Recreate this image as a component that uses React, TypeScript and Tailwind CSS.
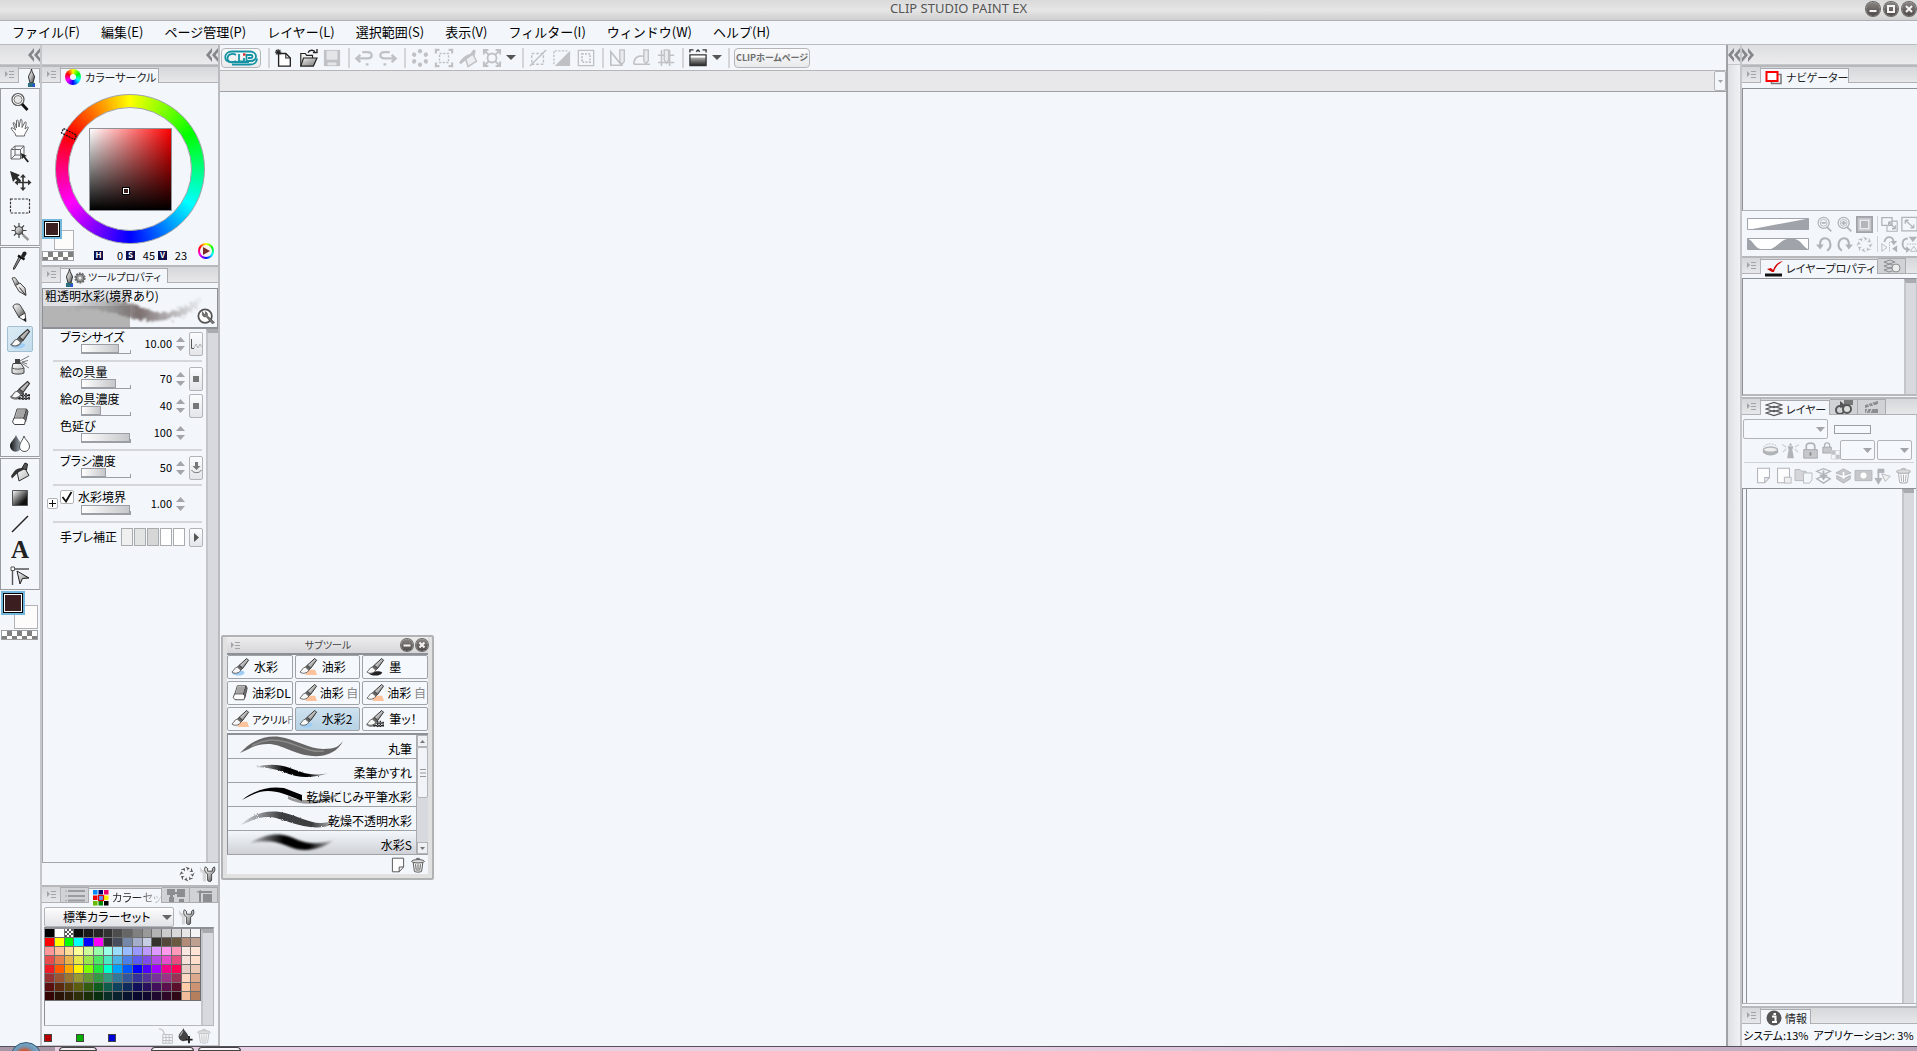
import React from "react";

const cx = (...c: (string | false | undefined)[]) => c.filter(Boolean).join(" ");

/* ---------- shared drawing helpers ---------- */

function Ico({
  children,
  s = 20,
  className = "",
}: {
  children: React.ReactNode;
  s?: number;
  className?: string;
}) {
  return (
    <svg
      width={s}
      height={s}
      viewBox="0 0 20 20"
      fill="none"
      aria-hidden="true"
      className={cx("block shrink-0 overflow-visible", className)}
    >
      {children}
    </svg>
  );
}

function Defs() {
  return (
    <svg width="0" height="0" className="absolute" aria-hidden="true">
      <defs>
        <linearGradient id="metal" x1="0" y1="0" x2="1" y2="1">
          <stop offset="0" stopColor="#ffffff" />
          <stop offset="0.5" stopColor="#b8b8b8" />
          <stop offset="1" stopColor="#333" />
        </linearGradient>
        <linearGradient id="light" x1="0" y1="0" x2="1" y2="1">
          <stop offset="0" stopColor="#ffffff" />
          <stop offset="1" stopColor="#b5b5b5" />
        </linearGradient>
        <linearGradient id="dark" x1="0" y1="0" x2="1" y2="0">
          <stop offset="0" stopColor="#111" />
          <stop offset="1" stopColor="#a9b4be" />
        </linearGradient>
        <linearGradient id="grad" x1="0" y1="0" x2="1" y2="1">
          <stop offset="0" stopColor="#ffffff" />
          <stop offset="0.75" stopColor="#111" />
        </linearGradient>
        <linearGradient id="folder" x1="0" y1="0" x2="1" y2="1">
          <stop offset="0" stopColor="#eee" />
          <stop offset="1" stopColor="#777" />
        </linearGradient>
        <linearGradient id="screen" x1="0" y1="0" x2="0" y2="1">
          <stop offset="0" stopColor="#ddd" />
          <stop offset="1" stopColor="#222" />
        </linearGradient>
        <linearGradient id="wash" x1="0" y1="0" x2="1" y2="0">
          <stop offset="0" stopColor="#555" stopOpacity="0" />
          <stop offset="0.3" stopColor="#777" stopOpacity="0.4" />
          <stop offset="0.55" stopColor="#6e6060" stopOpacity="0.9" />
          <stop offset="0.8" stopColor="#8a8282" stopOpacity="0.55" />
          <stop offset="1" stopColor="#999" stopOpacity="0.15" />
        </linearGradient>
        <linearGradient id="fadeBoth" x1="0" y1="0" x2="1" y2="0">
          <stop offset="0" stopColor="#000" stopOpacity="0.15" />
          <stop offset="0.4" stopColor="#000" />
          <stop offset="0.7" stopColor="#000" />
          <stop offset="1" stopColor="#000" stopOpacity="0.1" />
        </linearGradient>
        <filter id="rough" x="-10%" y="-30%" width="120%" height="160%">
          <feTurbulence type="fractalNoise" baseFrequency="0.25" numOctaves="3" result="n" />
          <feDisplacementMap in="SourceGraphic" in2="n" scale="10" />
          <feGaussianBlur stdDeviation="0.8" />
        </filter>
        <filter id="grain" x="-10%" y="-30%" width="120%" height="160%">
          <feTurbulence type="fractalNoise" baseFrequency="0.6" numOctaves="2" result="n" />
          <feDisplacementMap in="SourceGraphic" in2="n" scale="2.500" />
        </filter>
        <filter id="soft" x="-10%" y="-30%" width="120%" height="160%">
          <feGaussianBlur stdDeviation="1.3" />
        </filter>
      </defs>
    </svg>
  );
}

const Brush = ({ blob }: { blob?: React.ReactNode }) => (
  <>
    {blob}
    <path d="M17.500.5 19.500 2.500 13 11.500 9.200 8Z" fill="url(#metal)" stroke="#333" strokeWidth="1.100" />
    <path d="M9.200 8 13 11.500 10.800 13.500 7 10Z" fill="#666" stroke="#333" strokeWidth="0.8" />
    <path
      d="M7.200 10.200C3.600 10.200 4 13.800 1 15.500c2.500 2.500 8.500 1.800 9.800-2.200Z"
      fill="#f7f7f7"
      stroke="#666"
      strokeWidth="1.100"
    />
  </>
);
const BlobBlue = <path d="M1 15c3-1 14-2 14 1 0 4-11 5-14 1Z" fill="#9fcdf5" />;
const BlobOrange = <path d="M2 19h5l3-6h8l2 6Z" fill="#fcc29b" />;
const BlobInk = <path d="M3 17c4-3 13-3 15-1-1 4-12 5-15 1Z" fill="#222" />;
const BlobPattern = (
  <>
    <path d="M0 16c3-3 8-2 10 1-3 3-8 2-10-1Z" fill="#888" />
    <path
      d="M10 13v6M13 12v7M16 12v7M19 13v6M8 14.500h12M8 17.500h12"
      stroke="#222"
      strokeWidth="1.500"
      strokeDasharray="2 .8"
    />
  </>
);
const EraserShape = (
  <>
    <path d="M7 2h9.500l-3 10H4Z" fill="url(#light)" stroke="#444" />
    <path d="M16.500 2 18 4.500 15.500 15l-2-3Z" fill="#777" stroke="#444" />
    <path d="M4 11h9l2.500 2-1 4.500H4.500L2.500 15Z" fill="#fff" stroke="#444" />
    <path d="M7.500 3h8l-2 7h-8Z" fill="#a5a5a5" />
  </>
);
const Wrenches = (
  <>
    <path d="M0 1v5c1 2 2 3 3.500 3.500V18c0 2 4 2 4 0V9L9 6 7 1 6 5H3Z" fill="#d6d7d9" />
    <path
      d="M6.500 1C5 5 6.500 8.500 9.500 10v7.500c0 2.500 5 2.500 5 0V10c3.500-1.500 5-5 3.500-9L15.500 3v3.500h-6V3Z"
      fill="url(#metal)"
      stroke="#4a4a4a"
      strokeWidth="1.200"
    />
  </>
);
const Recycle = ({ c }: { c: string }) => (
  <g fill={c}>
    {[0, 45, 90, 135, 180, 225, 270, 315].map((a) => (
      <path key={a} d="M8 .5 13.500 2.800 10 6 10.500 3.600Z" transform={`rotate(${a} 10 10)`} />
    ))}
  </g>
);
const Trash = ({ c = "#666" }: { c?: string }) => (
  <>
    <path d="M4 7h12l-1.500 11c-2 1.200-7 1.200-9 0Z" fill="#fafafa" stroke={c} strokeWidth="1.200" />
    <path d="M2 5.500C2.500 2.500 17.500 2.500 18 5.500 17.500 8 2.500 8 2 5.500Z" fill="#ddd" stroke={c} strokeWidth="1.200" />
    <path d="M7.500 3C7.500 1 12.500 1 12.500 3M7 9l.8 8M10 9v8.500M13 9l-.8 8" stroke={c} strokeWidth="1.200" />
  </>
);
const Page = ({ c = "#555" }: { c?: string }) => (
  <path d="M3 1.500h14v11l-5.500 6H3ZM17 12.500h-5.500v6" fill="#fdfdfd" stroke={c} strokeWidth="1.200" />
);

/* ---------- small controls ---------- */

const RING = "bg-[conic-gradient(#ff0,#0f0,#0ff,#00f,#f0f,#f00,#ff0)]";
const CHECK =
  "bg-[repeating-conic-gradient(#808080_0_25%,#fff_0_50%)] bg-[length:10px_10px]";

function MenuGlyph({ className = "" }: { className?: string }) {
  return (
    <svg width="9" height="9" viewBox="0 0 9 9" aria-hidden="true" className={className}>
      <path d="M0 1v6l3-3Z" fill="#a2a4a8" />
      <path d="M4 1.500h5M4 4.500h5M4 7.500h5" stroke="#a2a4a8" />
    </svg>
  );
}

function Header({ children }: { children: React.ReactNode }) {
  return (
    <header className="flex h-[18px] shrink-0 border-t-2 border-[#b6b8bb] bg-linear-to-b from-[#d6d7da] to-[#e8e8ea]">
      <button
        aria-label="パレットメニュー"
        className="flex w-[19px] shrink-0 items-center justify-center border-r border-b border-[#b0b2b6]"
      >
        <MenuGlyph />
      </button>
      {children}
      <div className="flex-1 border-b border-[#b0b2b6]" />
    </header>
  );
}

function Tab({
  icon,
  children,
  className = "",
}: {
  icon: React.ReactNode;
  children?: React.ReactNode;
  className?: string;
}) {
  return (
    <button
      className={cx(
        "mt-px flex h-[15px] shrink-0 items-start gap-[3px] overflow-visible border-t border-r border-[#a9abaf] bg-[#f3f7fc] pl-1 text-[11px] leading-4 whitespace-nowrap text-[#222] [font-feature-settings:'palt']",
        className,
      )}
    >
      {icon}
      {children}
    </button>
  );
}

function IdleTab({ icon, label }: { icon: React.ReactNode; label: string }) {
  return (
    <button
      aria-label={label}
      className="flex w-[28px] shrink-0 items-center justify-center overflow-hidden border-t border-r border-b border-[#a9abaf] bg-[#d0d2d6]"
    >
      {icon}
    </button>
  );
}

function Chevrons({ right }: { right?: boolean }) {
  return (
    <svg width="12" height="14" viewBox="0 0 12 14" aria-hidden="true" className={right ? "rotate-180" : ""}>
      <path d="M6 0 0 7l6 7V10L3.500 7 6 4ZM12 0 6 7l6 7V10L9.500 7 12 4Z" fill="#858689" />
    </svg>
  );
}

const DockBar = ({ children, className = "" }: { children: React.ReactNode; className?: string }) => (
  <div
    className={cx(
      "flex h-5 shrink-0 items-center border-b border-[#c4c6c9] bg-linear-to-b from-[#dddee0] to-[#ebebed]",
      className,
    )}
  >
    {children}
  </div>
);

const ScrollTrack = ({ className = "" }: { className?: string }) => (
  <div className={cx("w-[12px] shrink-0 border-t-4 border-l-2 border-t-[#a9abaf] border-l-[#c4c5ca] bg-[#d8d9de]", className)} />
);

function Swatches({ big }: { big?: boolean }) {
  return (
    <div className={big ? "w-[38px] pl-px" : "w-[32px]"}>
      <div className={cx("relative", big ? "h-[38px]" : "h-[31px]")}>
        <button
          aria-label="サブカラー"
          className={cx(
            "absolute right-0 bottom-0 border border-[#b0b2b6] bg-[#fdfcfa]",
            big ? "size-[24px]" : "size-[20px]",
          )}
        />
        <button
          aria-label="メインカラー"
          className={cx(
            "absolute top-0 left-0 border-2 border-[#73b8dc] bg-white",
            big ? "size-[24px]" : "size-[20px]",
          )}
        >
          <span className="block size-full border border-black bg-white p-px">
            <span className="block size-full bg-[#3b1f20]" />
          </span>
        </button>
      </div>
      <button
        aria-label="透明色"
        className={cx("mt-px block h-[10px] w-full border border-[#9b9da1]", CHECK)}
      />
    </div>
  );
}

/* ---------- tool column ---------- */

type Tool = { name: string; icon: React.ReactNode; on?: boolean };

const tools: Tool[][] = [
  [
    {
      name: "虫めがね",
      icon: (
        <Ico>
          <circle cx="8" cy="7.500" r="6" stroke="#555" strokeWidth="1.200" fill="#fff" />
          <circle cx="8" cy="7.500" r="4" stroke="#777" strokeWidth="1" fill="#e8e8e8" />
          <path d="m12 12 5.500 6" stroke="#111" strokeWidth="2.800" />
        </Ico>
      ),
    },
    {
      name: "移動",
      icon: (
        <Ico>
          <path
            d="M6 18c0-3-5-6-5-8 1.500-1 3 1 4.500 2L3 5c1-1.500 2 0 3.500 5L6.500 2.500c1-1.500 2-.5 2.500 6.500L10.500 1.500c1-1 2 0 1.500 8L15 4c1.500-.5 1.500.5 0 7l2.500-2c1.500 0 1 1-1.500 5-1 2-1.500 2-1.500 4Z"
            fill="#fdfdfd"
            stroke="#666"
          />
        </Ico>
      ),
    },
    {
      name: "操作",
      icon: (
        <Ico>
          <path d="M1 5.500 5 2h9v9l-3.500 4H1ZM1 5.500h9.500V15M10.500 5.500 14 2M5 2v9L1 15M5 11h9" stroke="#666" />
          <path d="m11 9 1 6 1.500-1.500 4 5 1.500-1-4-5L17 12Z" fill="#222" />
        </Ico>
      ),
    },
    {
      name: "レイヤー移動",
      icon: (
        <Ico>
          <path d="m0 1 3 11 2.500-3L10 13l1-2.500L7.500 7 10 5Z" fill="#2a2a2a" />
          <path d="M13 6v13M6.500 12.500h13" stroke="#333" strokeWidth="1.600" />
          <path d="m13 4 3 3.500h-6ZM13 21l3-3.500h-6ZM4.500 12.500 8 9.500v6ZM21.500 12.500 18 9.500v6Z" fill="#333" />
        </Ico>
      ),
    },
    {
      name: "選択範囲",
      icon: (
        <Ico>
          <path d="M.5 3h19v14H.5Z" stroke="#333" strokeWidth="1.200" strokeDasharray="2.500 1.300" />
        </Ico>
      ),
    },
    {
      name: "自動選択",
      icon: (
        <Ico>
          <path d="M9 1v15M1.500 8.500h15M4 3.500l10 10M14 3.500l-10 10" stroke="#444" strokeWidth="1.200" />
          <circle cx="9" cy="8.500" r="4" fill="url(#metal)" stroke="#444" />
          <path d="m13 13 5.500 5" stroke="#999" strokeWidth="2.400" />
        </Ico>
      ),
    },
  ],
  [
    {
      name: "スポイト",
      icon: (
        <Ico>
          <path d="m11 7-6.500 11-1 .5V17l5.500-11Z" fill="#999" stroke="#333" />
          <path d="m8 4.500 6.500 4" stroke="#111" strokeWidth="2.500" />
          <path d="m11 5 2-4c2-1.500 4 0 3.500 2L14 7Z" fill="#222" />
        </Ico>
      ),
    },
    {
      name: "ペン",
      icon: (
        <Ico>
          <path d="M2 1 5 .5 9 6l-3.500 3Z" fill="url(#metal)" stroke="#555" />
          <path d="M5.500 8.500 10 6l5 5 1 7.500-7-4Z" fill="url(#light)" stroke="#444" />
          <path d="m9.500 10.500 6 7.500" stroke="#333" />
        </Ico>
      ),
    },
    {
      name: "鉛筆",
      icon: (
        <Ico>
          <path d="M3 4c0-3 5-4 7-2l5 8-6 4.500Z" fill="url(#metal)" stroke="#444" />
          <path d="m8.500 14 6.500-4 1 8.500Z" fill="#fff" stroke="#444" />
          <path d="m13 16.500 3 2-.5-3.500Z" fill="#111" />
        </Ico>
      ),
    },
    { name: "筆", on: true, icon: <Ico><Brush blob={BlobBlue} /></Ico> },
    {
      name: "エアブラシ",
      icon: (
        <Ico>
          <path d="M10 6 19 1M10 7l9 6M12 7l6-1.500M12 7l5 2" stroke="#777" />
          <path d="M5 4h5v4H5Z" fill="#444" />
          <path d="M3 8.500h8L14 13v5c-3 1.500-9 1.500-12 0v-5Z" fill="url(#light)" stroke="#444" />
          <path d="M2 13c3 1.500 9 1.500 12 0" stroke="#555" />
        </Ico>
      ),
    },
    { name: "デコレーション", icon: <Ico><Brush blob={BlobPattern} /></Ico> },
    { name: "消しゴム", icon: <Ico>{EraserShape}</Ico> },
    {
      name: "色混ぜ",
      icon: (
        <Ico>
          <path d="M6 2c2 5 5.500 7 5.500 11A5.500 5.500 0 0 1 0 13C0 9 4 7 6 2Z" fill="url(#dark)" />
          <path d="M14 3c1 4 5.500 6 5.500 10A5 5 0 0 1 9.500 14C9.500 9.500 13 7 14 3Z" fill="#fff" stroke="#555" />
        </Ico>
      ),
    },
  ],
  [
    {
      name: "塗りつぶし",
      icon: (
        <Ico>
          <path d="M7 9.500 14.500 5.500 19 13.500 9 19Z" fill="url(#light)" stroke="#333" />
          <path d="M15 7C13 5 7 6 4.500 9L1 14l1 2.500 4-4 3-2.500Z" fill="#333" />
          <path d="m12 6 3-5 2.500 1-1 6Z" fill="#555" stroke="#222" />
        </Ico>
      ),
    },
    {
      name: "グラデーション",
      icon: (
        <Ico>
          <path d="M2.500 2.500h15v15h-15Z" fill="url(#grad)" stroke="#555" />
        </Ico>
      ),
    },
    {
      name: "図形",
      icon: (
        <Ico>
          <path d="M2 18 18 2" stroke="#222" strokeWidth="1.500" />
        </Ico>
      ),
    },
    {
      name: "テキスト",
      icon: <span className="font-['Liberation_Serif',serif] text-[25px] leading-5 font-bold text-[#222]">A</span>,
    },
    {
      name: "図形操作",
      icon: (
        <Ico>
          <path d="M2.500 3v16M2 3h17" stroke="#555" strokeWidth="1.400" />
          <path d="M1 1h3.500v3.500H1Z" fill="#fff" stroke="#555" />
          <path d="m7 5 3 13 2.500-5.500L19 12Z" fill="url(#metal)" stroke="#222" />
        </Ico>
      ),
    },
  ],
];

const PenTip = (
  <svg width="9" height="18" viewBox="0 0 9 18" aria-hidden="true" className="shrink-0">
    <path d="M4.500 0c-.6 4-3 6-3 8l1.500 6h3l1.500-6c0-2-2.400-4-3-8Z" fill="url(#metal)" stroke="#333" />
    <path d="M1 14h7v4H1Z" fill="#2a6f7e" />
    <path d="M5.500 15H8v3H5.500Z" fill="#2a50d8" />
  </svg>
);

function ToolColumn() {
  return (
    <aside className="flex w-[42px] shrink-0 flex-col border-r-2 border-[#c4c6ca]">
      <DockBar className="justify-end">
        <button aria-label="折りたたむ"><Chevrons /></button>
      </DockBar>
      <Header>
        <Tab className="w-[21px] justify-center pl-0" icon={PenTip} />
      </Header>
      <div className="mt-[5px] flex flex-col gap-px">
        {tools.map((group, i) => (
          <div key={i} className="flex flex-col border border-[#9a9ca1] border-r-[#b6b8bc]">
            {group.map((t) => (
              <button
                key={t.name}
                aria-label={t.name}
                className={cx(
                  "mx-auto flex h-[26px] w-[26px] items-center justify-center rounded-xs border",
                  t.on ? "border-[#a3bfd2] bg-linear-to-br from-[#dcebf5] to-[#c2dcec]" : "border-transparent",
                )}
              >
                {t.icon}
              </button>
            ))}
          </div>
        ))}
      </div>
      <div className="mt-px">
        <Swatches big />
      </div>
    </aside>
  );
}

/* ---------- colour wheel ---------- */

function Hsv({ k, v }: { k: string; v: string }) {
  return (
    <label className="flex items-center gap-[3px]">
      <span className="flex h-[9px] w-[9px] items-center justify-center bg-[#0c0c48] text-[8px] leading-none font-bold text-white">
        {k}
      </span>
      <input
        defaultValue={v}
        className="w-[17px] bg-transparent text-right text-[11px] leading-3 text-black"
      />
    </label>
  );
}

function ColorCircle() {
  return (
    <section className="relative h-[182px] shrink-0">
      <div className="absolute top-[11px] left-[13px] size-[150px]">
        <div className={cx("size-full rounded-full border border-[#9fa3a8] p-[12px]", RING)}>
          <div className="flex size-full items-center justify-center rounded-full border border-[#9fa3a8] bg-[#f3f7fc]">
            <div className="relative size-[83px] border border-[#8f9398] bg-[linear-gradient(to_top,#000,transparent),linear-gradient(to_right,#fff,#f00)]">
              <div className="absolute top-[58px] left-[32px] size-[8px] border-2 border-black bg-[#3b1f20] outline-1 -outline-offset-2 outline-white" />
            </div>
          </div>
        </div>
        <svg width="18" height="14" viewBox="0 0 18 14" className="absolute top-[33px] left-[5px]" aria-hidden="true">
          <path d="m3.500 1.500 13 6.500-2 4.500-13-6.500Z" stroke="#111" fill="none" strokeDasharray="2 1" strokeWidth="1.200" />
        </svg>
      </div>
      <div className="absolute bottom-[4px] left-0 flex w-full items-end">
        <Swatches />
        <div className="flex flex-1 items-center justify-end gap-[3px] pr-[11px]">
          <Hsv k="H" v="0" />
          <Hsv k="S" v="45" />
          <Hsv k="V" v="23" />
        </div>
        <button
          aria-label="HLS色空間に切り替え"
          className={cx("mr-1 mb-0.5 flex size-4 items-center justify-center rounded-full p-[2px]", RING)}
        >
          <span className="flex size-full items-center justify-center rounded-full bg-[#f6f2f2]">
            <svg width="7" height="8" viewBox="0 0 7 8" aria-hidden="true">
              <path d="M0 0v8l7-4Z" fill="#7a2c2c" />
            </svg>
          </span>
        </button>
      </div>
    </section>
  );
}

/* ---------- tool property ---------- */

const MINI =
  "flex h-[24px] w-[14px] shrink-0 items-center justify-center rounded-xs border border-[#b2b4b8] bg-linear-to-b from-[#fbfcfe] to-[#e4e5e9]";

function Spinner() {
  return (
    <span className="flex flex-col gap-[4px]">
      <button aria-label="増やす">
        <svg width="9" height="5" viewBox="0 0 9 5" className="block"><path d="M0 5h9L4.500 0Z" fill="#a2a4a8" /></svg>
      </button>
      <button aria-label="減らす">
        <svg width="9" height="5" viewBox="0 0 9 5" className="block"><path d="M0 0h9L4.500 5Z" fill="#a2a4a8" /></svg>
      </button>
    </span>
  );
}

type Prop = { id: string; label: string; value: string; fill: number; btn?: React.ReactNode; check?: boolean };

function PropRow({ p }: { p: Prop }) {
  return (
    <div className={cx("flex pr-[3px]", p.check ? "h-[29px]" : "h-[27px]")}>
      <div className="flex w-[17px] shrink-0 items-center pl-[4px]">
        {p.check && (
          <button aria-label="設定を開く" className="flex size-[11px] items-center justify-center rounded-xs border border-[#b2b4b8] bg-white">
            <svg width="7" height="7" viewBox="0 0 7 7" aria-hidden="true"><path d="M3.500 0v7M0 3.500h7" stroke="#111" /></svg>
          </button>
        )}
      </div>
      <div className="w-[71px] shrink-0">
        <div className={cx("flex items-center", p.check ? "h-[15px]" : "h-[13px]")}>
          {p.check && (
            <>
              <input
                type="checkbox"
                defaultChecked
                aria-label={p.label}
                className="size-[14px] shrink-0 appearance-none rounded-xs border border-[#b2b4b8] bg-white"
              />
              <svg width="12" height="12" viewBox="0 0 12 12" className="pointer-events-none -ml-[13px] mr-[5px] shrink-0" aria-hidden="true">
                <path d="M1.500 6 5 10.500 10.500 1" stroke="#111" strokeWidth="1.800" fill="none" />
              </svg>
            </>
          )}
          <label htmlFor={p.id} className="text-[12px] leading-[13px] whitespace-nowrap text-black [font-feature-settings:'palt']">
            {p.label}
          </label>
        </div>
        <div className="relative mt-[2px] ml-auto flex h-[9px] w-[50px] items-end border-b border-[#9b9fa5]">
          <span
            className="block h-[9px] border border-[#9b9fa5] bg-linear-to-r from-white to-[#c6c7ca]"
            style={{ width: `${p.fill}%` }}
          />
          <span className="ml-auto h-[3px] w-px bg-[#9b9fa5]" />
          <input
            type="range"
            aria-label={p.label}
            defaultValue={p.fill}
            className="absolute inset-0 m-0 size-full cursor-pointer opacity-0"
          />
        </div>
      </div>
      <div className="flex flex-1 items-center justify-end gap-1">
        <input
          id={p.id}
          defaultValue={p.value}
          className="w-9 bg-transparent text-right text-[11px] text-black"
        />
        <Spinner />
        <div className="flex w-[14px] shrink-0">{p.btn && <button aria-label="影響元設定" className={MINI}>{p.btn}</button>}</div>
      </div>
    </div>
  );
}

const DOT = <span className="size-[6px] bg-[#777]" />;
const rows: (Prop | "-")[] = [
  {
    id: "size", label: "ブラシサイズ", value: "10.00", fill: 75,
    btn: (
      <svg width="12" height="12" viewBox="0 0 12 12" aria-hidden="true">
        <path d="M1.500 1v9.500H4" stroke="#555" fill="none" />
        <path d="m4 10 2-4 2 4 2-4 1.500 3" stroke="#999" fill="none" strokeDasharray="1.500 .8" />
      </svg>
    ),
  },
  "-",
  { id: "amount", label: "絵の具量", value: "70", fill: 70, btn: DOT },
  { id: "density", label: "絵の具濃度", value: "40", fill: 40, btn: DOT },
  { id: "stretch", label: "色延び", value: "100", fill: 100 },
  "-",
  {
    id: "brush", label: "ブラシ濃度", value: "50", fill: 50,
    btn: (
      <svg width="11" height="12" viewBox="0 0 11 12" aria-hidden="true">
        <path d="M4 0h3v4h2.500l-4 4-4-4H4Z" fill="#777" />
        <path d="M.5 8c2 3.500 8 3.500 10 0" stroke="#777" fill="none" />
      </svg>
    ),
  },
  "-",
  { id: "edge", label: "水彩境界", value: "1.00", fill: 100, check: true },
  "-",
];

function ToolProperty() {
  return (
    <section className="flex min-h-0 flex-1 flex-col">
      <div className="relative mt-[5px] h-[41px] shrink-0 overflow-hidden border border-b-2 border-[#8d9096]">
        <svg viewBox="0 0 174 38" className="absolute inset-0 h-full w-[174px]" aria-hidden="true">
          <path d="M0 0h87v17H0Z" fill="#dfe1e5" />
          <path d="M0 17h87v21H0Z" fill="#b4b4b4" />
          <path d="M20 22C45 8 75 8 95 17s35 10 63-9c-4 20-36 26-62 23-26-6-45-16-76-9Z" fill="url(#wash)" filter="url(#rough)" />
        </svg>
        <div className="relative pl-[2px] text-[12px] leading-[14px] whitespace-nowrap text-black [font-feature-settings:'palt']">
          粗透明水彩(境界あり)
        </div>
        <button aria-label="サブツール詳細" className="absolute right-[2px] bottom-px">
          <Ico s={18}>
            <circle cx="9" cy="9" r="7.500" fill="#fff" stroke="#555" strokeWidth="2" />
            <path d="M6 4v4l2 2 2-.5 7 8 2.500-1.500-8-7.500V6L9.500 4v3H8Z" fill="#777" stroke="#444" strokeWidth="0.700" />
          </Ico>
        </button>
      </div>
      <div className="flex min-h-0 flex-1 border-b border-l border-[#a3a6ab]">
        <div className="min-w-0 flex-1 pt-px">
          {rows.map((r, i) =>
            r === "-" ? (
              <hr key={i} className="my-[3px] mr-1 ml-[10px] border-t-2 border-[#d4d6da]" />
            ) : (
              <PropRow key={i} p={r} />
            ),
          )}
          <div className="flex h-[22px] items-center pr-[3px] pl-[17px]">
            <span className="w-[61px] text-[12px] whitespace-nowrap text-black [font-feature-settings:'palt']">手ブレ補正</span>
            <div className="flex flex-1 gap-px">
              {["bg-[#f0f0f0]", "bg-[#e2e3e3]", "bg-[#d6d6d6]", "bg-white", "bg-white"].map((c, i) => (
                <button key={i} aria-label={`手ブレ補正 ${i + 1}`} className={cx("h-[18px] w-3 border border-[#a9abaf]", c)} />
              ))}
            </div>
            <button aria-label="手ブレ補正の詳細" className="flex h-[19px] w-[14px] items-center justify-center rounded-xs border border-[#b2b4b8] bg-linear-to-b from-[#fbfcfe] to-[#e4e5e9]">
              <svg width="5" height="9" viewBox="0 0 5 9" aria-hidden="true"><path d="M0 0v9l5-4.500Z" fill="#555" /></svg>
            </button>
          </div>
        </div>
        <ScrollTrack />
      </div>
      <div className="flex h-[22px] shrink-0 items-center justify-end gap-[5px] pr-[2px]">
        <button aria-label="初期設定に戻す"><Ico s={16}><Recycle c="#555" /></Ico></button>
        <button aria-label="詳細設定"><Ico s={16}>{Wrenches}</Ico></button>
      </div>
    </section>
  );
}

/* ---------- colour set ---------- */

const palette = [
  "000 fff check 0d0d0d 1a1a1a 262626 333 4d4d4d 666 808080 999 b3b3b3 ccc d9d9d9 e6e6e6 f5f5f5",
  "f00 ff0 0f0 0ff 00f f0f 2b2d33 474d5c 7688aa a4aecb c5cee3 35312b 54483a 6b5840 b38c78 bea090",
  "f99 ffbd99 fd9 ff9 cf9 9fa 99ffe6 9df 9bf 99f b9f d9f f9e f9b fbe7df ffe3d6",
  "e64d4d e6804d e6b34d e6e64d 99e64d 4de666 4de6c3 4db3e6 4d80e6 5e5eee 804de6 b34de6 e64dcc e64d80 f5e1da ffdfcc",
  "ee1c24 ff5a00 ffa500 fff200 80ff00 22e63c 00ffcc 00a2ff 0058ff 0000ff 4d00ff a200ff f0008c ff0058 e6cdc5 ebc8b4",
  "933 953 973 993 693 394 339980 379 359 339 539 739 938 935 ffd9c4 dba98c",
  "5c0f0f 5c2b0f 5c420f 5c5c0f 335c0f 0f5c1c 0f5c4a 0f425c 0f2b5c 0f0f5c 270f5c 420f5c 5c0f4d 5c0f2b ffccaa cc9373",
  "330505 291206 2e2008 2e2e08 1b2e08 082e10 082e27 08222e 08142e 08082e 10082e 1e082e 2e0826 2e0815 f2bb99 b37f5c",
].map((r) => r.split(" "));

const ColorSetIcon = (
  <svg width="16" height="16" viewBox="0 0 16 16" aria-hidden="true" className="mt-px shrink-0">
    {["#08f", "#006", "#e06", "#e00", "#fff", "#fe0", "#6b0", "#080", "#000"].map((c, i) => (
      <rect key={i} x={(i % 3) * 5.500} y={Math.floor(i / 3) * 5.500} width="4.500" height="4.500" fill={c} />
    ))}
    <rect x="5.500" y="5.500" width="5" height="5" fill="#59f" stroke="#e00" strokeWidth="1.200" />
  </svg>
);

function ColorSet() {
  return (
    <section className="flex h-[143px] shrink-0 flex-col border-b border-[#c4c6ca] pr-1 pl-[2px]">
      <div className="mt-[4px] flex h-5 items-center gap-[5px]">
        <div className="relative w-[130px]">
          <select
            aria-label="カラーセット"
            className="block h-5 w-full appearance-none rounded-xs border border-[#b2b4b8] bg-linear-to-b from-[#fdfdfe] to-[#e2e3e7] pl-[18px] text-[12px] leading-4 text-black [font-feature-settings:'palt']"
          >
            <option>標準カラーセット</option>
          </select>
          <svg width="10" height="5" viewBox="0 0 10 5" className="pointer-events-none absolute top-[8px] right-[2px]" aria-hidden="true">
            <path d="M0 0h10L5 5Z" fill="#666" />
          </svg>
        </div>
        <button aria-label="カラーセットを編集"><Ico s={16}>{Wrenches}</Ico></button>
      </div>
      <div className="flex h-[99px] border border-t-2 border-[#8d9096] border-r-[#b6b8bc] border-b-[#b6b8bc]">
        <div className="flex-1">
          <div className="grid h-[72px] grid-cols-16 gap-px bg-[#6f6f6f] pr-px pb-px">
            {palette.flat().map((c, i) =>
              c === "check" ? (
                <button key={i} aria-label="透明" className="bg-[repeating-conic-gradient(#555_0_25%,#fff_0_50%)] bg-[length:4px_4px]" />
              ) : (
                <button key={i} aria-label={`#${c}`} style={{ backgroundColor: `#${c}` }} />
              ),
            )}
          </div>
        </div>
        <ScrollTrack />
      </div>
      <div className="flex flex-1 items-center">
        {["bg-[#b80000]", "bg-[#00b000]", "bg-[#0000d8]"].map((c) => (
          <button key={c} aria-label="スウォッチ" className={cx("mr-6 mt-1 size-[8px] border border-[#444]", c)} />
        ))}
        <div className="ml-auto flex items-center gap-[3px] pr-[2px]">
          <Ico s={16}>
            <path d="M6 8h12v11H6ZM6 12h12M6 15.500h12M10 8v11M14 8v11" stroke="#c0c2c6" strokeWidth="1.300" />
            <path d="M1 1c5 0 6 3 7 7" stroke="#c0c2c6" strokeWidth="1.500" />
          </Ico>
          <button aria-label="色を追加">
            <Ico s={16}>
              <path d="M8 0c1 4 6 7 6 10.500A6 6 0 0 1 2 10.500C2 7 7 4 8 0Z" fill="#444" />
              <path d="M7 4c0 2-3 4-3 6" stroke="#aaa" strokeWidth="1.500" />
              <path d="M15 10v9M10.500 14.500h9" stroke="#222" strokeWidth="2.400" />
            </Ico>
          </button>
          <button aria-label="色を削除"><Ico s={16}><Trash c="#c0c2c6" /></Ico></button>
        </div>
      </div>
    </section>
  );
}

function ColorColumn() {
  return (
    <aside className="flex w-[178px] shrink-0 flex-col border-r-2 border-[#b9bbbf]">
      <DockBar className="justify-end">
        <button aria-label="折りたたむ"><Chevrons /></button>
      </DockBar>
      <Header>
        <Tab
          className="w-[98px]"
          icon={
            <span className={cx("mr-px flex size-4 shrink-0 items-center justify-center rounded-full", RING)}>
              <span className="size-[6px] rounded-full bg-[#f3f7fc]" />
            </span>
          }
        >
          カラーサークル
        </Tab>
      </Header>
      <ColorCircle />
      <Header>
        <Tab
          className="w-[107px]"
          icon={
            <span className="flex shrink-0 items-start">
              {PenTip}
              <svg width="12" height="12" viewBox="0 0 12 12" className="-mr-px mt-[3px]" aria-hidden="true">
                <circle cx="6" cy="6" r="4.500" fill="#aaa" stroke="#666" strokeWidth="2.200" strokeDasharray="1.800 1" />
                <circle cx="6" cy="6" r="3.800" fill="#999" stroke="#666" />
                <circle cx="6" cy="6" r="1.500" fill="#eee" />
              </svg>
            </span>
          }
        >
          <span className="text-[10px]">ツールプロパティ</span>
        </Tab>
      </Header>
      <ToolProperty />
      <Header>
        <IdleTab
          label="カラースライダー"
          icon={
            <svg width="20" height="13" viewBox="0 0 20 13" aria-hidden="true">
              <path d="M0 2h2M0 7h2M0 11.500h2" stroke="#aaa" />
              <path d="M3 2h17M3 7h17M3 11.500h17" stroke="#9a9c9f" strokeWidth="2" />
            </svg>
          }
        />
        <Tab className="w-[73px]" icon={ColorSetIcon}>
          <span className="bg-linear-to-r from-[#222] from-50% to-[#222]/10 bg-clip-text text-transparent">
            カラーセッ
          </span>
        </Tab>
        <IdleTab
          label="中間色"
          icon={
            <svg width="18" height="13" viewBox="0 0 18 13" aria-hidden="true">
              <path d="M0 0h8v6H0ZM10 0h8v8h-8ZM2 8h5v5H2ZM12 10h5v3h-5ZM7 3h4v2H7ZM3 5h3v4H3Z" fill="#8b8d90" />
            </svg>
          }
        />
        <IdleTab
          label="カラーヒストリー"
          icon={
            <svg width="16" height="13" viewBox="0 0 16 13" aria-hidden="true">
              <path d="M0 3 5 1v3Z" fill="#8b8d90" />
              <path d="M3 2h13v2H5v9H3ZM7 5h9v8H7Z" fill="#8b8d90" />
            </svg>
          }
        />
      </Header>
      <ColorSet />
    </aside>
  );
}

/* ---------- command bar ---------- */

const G = "#bfc1c5";
const Sep = () => <span className="mr-[2px] ml-1 h-5 w-[2px] shrink-0 bg-[#d3d5d9]" />;
const Cmd = ({ label, children }: { label: string; children: React.ReactNode }) => (
  <button aria-label={label} className="flex h-6 w-6 shrink-0 items-center justify-center">
    <Ico s={18}>{children}</Ico>
  </button>
);
const Drop = () => (
  <button aria-label="メニュー" className="flex h-6 w-[14px] shrink-0 items-center justify-center">
    <svg width="10" height="5" viewBox="0 0 10 5" aria-hidden="true"><path d="M0 0h10L5 5Z" fill="#555" /></svg>
  </button>
);
const BTN = "shrink-0 rounded-sm border border-[#b4b6ba] bg-linear-to-b from-[#fbfbfc] to-[#e9eaec]";

function CommandBar() {
  return (
    <div className="flex h-[26px] shrink-0 items-center border-b border-[#b4b6ba] pl-px">
      <button aria-label="CLIP" className={cx("flex h-5 w-10 items-center justify-center", BTN)}>
        <svg width="36" height="16" viewBox="0 0 36 16" fill="none" stroke="#1593a5" strokeWidth="1.800" aria-hidden="true">
          <path d="M13 5C11 3.500 5 3 4.500 8s6 5 8.500 3" />
          <path d="M16 4v7.500h5V8M26 12H9C0 13 0 1.500 9 1.500h18c8 0 8 10 0 9.500h-3.500V5H28c2 0 2 3 0 3h-3" />
          <path d="M20 4.500h2.500" stroke="#e02a2a" strokeWidth="2.400" />
          <path d="M9 14.500h18c5 0 7-3 7-6" />
        </svg>
      </button>
      <span className="w-[3px]" />
      <Sep />
      <Cmd label="新規">
        <path d="M4 5h8l5 5v9H4Z" fill="#fff" stroke="#222" strokeWidth="1.500" />
        <path d="M12 5v5h5M3.500 0v7M0 3.500h7M1 1l5 5M6 1 1 6" stroke="#222" strokeWidth="1.200" />
      </Cmd>
      <Cmd label="開く">
        <path d="M2 19V5h5l1.500 2H15v4" fill="#eee" stroke="#222" strokeWidth="1.300" />
        <path d="M2 19 5 10h15l-4 9Z" fill="url(#folder)" stroke="#222" strokeWidth="1.300" />
        <path d="M10 4c2-4 7-3 8 0M15.500 4H20V0" stroke="#222" strokeWidth="1.500" />
      </Cmd>
      <Cmd label="保存">
        <path d="M1 1h18v18H1Z" fill={G} />
        <path d="M4 2h12v10H4ZM5 15h10v3H5Z" fill="#e4e5e8" />
      </Cmd>
      <Sep />
      <Cmd label="取り消し">
        <path d="M6 6.500 1.500 10.500 6 14.500M2 10.500h12c6 0 6-7 0-7H8M12 17h3" stroke={G} strokeWidth="2.600" />
      </Cmd>
      <Cmd label="やり直し">
        <path d="m14 6.500 4.500 4-4.500 4M18 10.500H6c-6 0-6-7 0-7h6M5 17h3" stroke={G} strokeWidth="2.600" />
      </Cmd>
      <Sep />
      <Cmd label="消去">
        <g fill={G}>
          {[0, 60, 120, 180, 240, 300].map((a) => (
            <circle key={a} cx="10" cy="2.500" r="2.400" transform={`rotate(${a} 10 10)`} />
          ))}
        </g>
      </Cmd>
      <Cmd label="選択範囲外を消去">
        <path d="M5 5h10v10H5Z" stroke={G} strokeWidth="1.500" strokeDasharray="2.500 1.500" />
        <path d="M1 5V1h4M15 1h4v4M19 15v4h-4M5 19H1v-4" stroke={G} strokeWidth="2.500" />
      </Cmd>
      <Cmd label="塗りつぶし">
        <path d="m7 10 8-5 4.500 8.500L10 19.500Z" fill="#eceef1" stroke={G} strokeWidth="1.600" />
        <path d="M16 6C11 4 5 8 0 15l2 2 7-6Z" fill={G} />
        <path d="m12 6 4-5.500 2.500 1-1 6Z" fill={G} />
      </Cmd>
      <Cmd label="拡大・縮小・回転">
        <circle cx="10" cy="10" r="5" stroke={G} strokeWidth="2" />
        <path d="M1 6V1h5M19 6V1h-5M1 14v5h5M19 14v5h-5M1 1l5.500 5.500M19 1l-5.500 5.500M1 19l5.500-5.500M19 19l-5.500-5.500" stroke={G} strokeWidth="2.200" />
      </Cmd>
      <Drop />
      <Sep />
      <Cmd label="選択を解除">
        <path d="M3 5h13v12H3Z" stroke={G} strokeWidth="1.600" strokeDasharray="3 2" />
        <path d="M1 19 19 1" stroke={G} strokeWidth="1.600" />
      </Cmd>
      <Cmd label="選択範囲を反転">
        <path d="M19 2v17H2Z" fill={G} />
        <path d="M1 17V2h15" stroke={G} strokeWidth="1.500" strokeDasharray="2.500 1.500" />
      </Cmd>
      <Cmd label="選択範囲の境界線">
        <path d="M1.500 1.500h17v17h-17Z" stroke={G} strokeWidth="1.500" />
        <path d="M5.500 5.500h9v9h-9Z" stroke={G} strokeWidth="2" strokeDasharray="2 1.500" />
      </Cmd>
      <Sep />
      <Cmd label="定規にスナップ">
        <path d="M2 3v15h12Z" stroke={G} strokeWidth="1.800" />
        <path d="M12 1h5v13l-2.500 3L12 14Z" fill="#e8eaed" stroke={G} strokeWidth="1.500" />
      </Cmd>
      <Cmd label="特殊定規にスナップ">
        <path d="M1 17C1 9 6 7 12 8M1 17h18" stroke={G} strokeWidth="1.800" />
        <path d="M12 1h5v12l-2.500 3.500L12 13Z" fill="#e8eaed" stroke={G} strokeWidth="1.500" />
      </Cmd>
      <Cmd label="グリッドにスナップ">
        <path d="M5 1v18M14 1v18M1 7h18M1 15h18" stroke={G} strokeWidth="1.800" />
        <path d="M8 1h5v11l-2.500 4L8 12Z" fill="#e8eaed" stroke={G} strokeWidth="1.500" />
      </Cmd>
      <Sep />
      <Cmd label="キャンバス表示">
        <path d="M1 4V1h4M15 1h4v3M8 3l2-2 2 2" stroke="#333" strokeWidth="1.500" />
        <path d="M1 6.500h18v12H1Z" fill="url(#screen)" stroke="#333" strokeWidth="1.400" />
        <path d="M2 7.500h16v2H2Z" fill="#fff" />
      </Cmd>
      <Drop />
      <Sep />
      <button className={cx("ml-[2px] h-5 w-[76px] text-center text-[9px] leading-[18px] font-bold whitespace-nowrap text-[#6e6e6e] [font-feature-settings:'palt']", BTN)}>
        CLIPホームページ
      </button>
    </div>
  );
}

/* ---------- floating sub tool palette ---------- */

const groups: { n: string; blob?: React.ReactNode; eraser?: boolean; on?: boolean; extra?: string; small?: boolean }[] = [
  { n: "水彩", blob: BlobBlue },
  { n: "油彩", blob: BlobOrange },
  { n: "墨", blob: BlobInk },
  { n: "油彩DL", eraser: true },
  { n: "油彩", blob: BlobOrange, extra: " 自" },
  { n: "油彩", blob: BlobOrange, extra: " 自" },
  { n: "アクリル", blob: BlobOrange, extra: "F", small: true },
  { n: "水彩2", blob: BlobBlue, on: true },
  { n: "筆ッ！", blob: BlobPattern },
];

const strokes = [
  {
    n: "丸筆",
    art: (
      <>
        <path d="M12 18C24 5 38 0 52 2s30 12 43 12 16-3 20-8C110 17 98 22 84 21 64 19 54 9 40 9S22 14 12 18Z" fill="#666" />
        <path d="M24 11C36 4 46 4 58 7s24 11 38 9" stroke="#8a8a8a" strokeWidth="1.500" fill="none" />
      </>
    ),
  },
  {
    n: "柔筆かすれ",
    art: (
      <g filter="url(#grain)">
        <path d="M27 8C40 5 50 5 62 9s18 9 40 5C88 18 78 19 68 17S52 9 27 8Z" fill="url(#fadeBoth)" />
      </g>
    ),
  },
  {
    n: "乾燥にじみ平筆水彩",
    art: (
      <>
        <path d="M60 13c14 7 40 6 54-6-8 14-38 18-54 9Z" fill="#999" />
        <path d="M14 17C28 6 42 3 56 5l18 7v6C60 12 50 8 40 8S22 13 14 17Z" fill="#000" />
      </>
    ),
  },
  {
    n: "乾燥不透明水彩",
    art: (
      <g filter="url(#grain)">
        <path d="M13 18C24 7 38 3 52 5s30 12 42 11 16-3 20-9C110 18 96 22 82 20 64 18 52 10 40 10S22 15 13 18Z" fill="url(#fadeBoth)" opacity="0.750" />
      </g>
    ),
  },
  {
    n: "水彩S",
    art: (
      <path d="M22 12C36 3 50 2 60 5s20 12 46 4C92 20 74 21 62 16S42 9 22 12Z" fill="url(#fadeBoth)" filter="url(#soft)" />
    ),
  },
];

const RoundBtn = ({ label, children, s = "size-3" }: { label: string; children: React.ReactNode; s?: string }) => (
  <button aria-label={label} className={cx("flex items-center justify-center rounded-full bg-linear-to-b from-[#8a8684] to-[#4e4a49] ring-1 ring-[#6a6866]", s)}>
    <svg width="10" height="10" viewBox="0 0 10 10" fill="none" stroke="#f4f4f4" strokeWidth="2" aria-hidden="true">
      {children}
    </svg>
  </button>
);

function SubTool() {
  return (
    <section className="absolute top-[543px] left-px w-[213px] rounded-xs border-2 border-[#b0b2b4] bg-[#e1e1e2] px-1 pb-[4px]">
      <header className="flex h-[16px] items-center bg-linear-to-b from-[#eeeeef] to-[#d6d6d8]">
        <MenuGlyph className="ml-1" />
        <h2 className="flex-1 pl-[15px] text-center text-[10px] leading-4 text-[#444] [font-feature-settings:'palt']">サブツール</h2>
        <div className="flex gap-[3px]">
          <RoundBtn label="最小化"><path d="M1.500 5.500h7" /></RoundBtn>
          <RoundBtn label="閉じる"><path d="m2.500 2.500 5 5M7.500 2.500l-5 5" /></RoundBtn>
        </div>
      </header>
      <div className="grid grid-cols-3 gap-[2px] border-t-2 border-[#8d9096] bg-[#f3f7fc] pb-[2px]">
        {groups.map((g, i) => (
          <button
            key={i}
            className={cx(
              "flex h-6 items-center gap-[3px] rounded-xs border border-[#9fa3a8] pl-[3px] whitespace-nowrap text-black [font-feature-settings:'palt']",
              g.on ? "bg-linear-to-b from-[#cfe2f0] to-[#b6d2e4]" : "bg-[#f5f9fd]",
              g.small ? "text-[10px]" : "text-[12px]",
            )}
          >
            <Ico s={18}>{g.eraser ? EraserShape : <Brush blob={g.blob} />}</Ico>
            <span className={g.extra || g.eraser ? "" : "pl-[2px]"}>
              {g.n}
              {g.extra && <span className="whitespace-pre text-[#888]">{g.extra}</span>}
            </span>
          </button>
        ))}
      </div>
      <div className="flex h-[121px] border-t-2 border-l border-[#8d9096] bg-[#f3f7fc]">
        <ul className="flex-1">
          {strokes.map((s, i) => (
            <li
              key={s.n}
              className={cx(
                "relative h-6 border-b border-[#9fa3a8]",
                i === 4 && "bg-linear-to-b from-[#f3f7fc] to-[#cfd1d6]",
              )}
            >
              <svg width="130" height="23" viewBox="0 0 130 23" className="absolute top-0 left-0" aria-hidden="true">
                {s.art}
              </svg>
              <button className="relative flex size-full items-end justify-end pr-1 text-[12px] leading-[19px] whitespace-nowrap text-black [font-feature-settings:'palt']">
                {s.n}
              </button>
            </li>
          ))}
        </ul>
        <div className="flex w-3 flex-col border-l border-[#a9abaf] bg-[#d8d9de]">
          <button aria-label="上へ" className="flex h-3 items-center justify-center border border-[#b2b4b8] bg-[#eef0f3]">
            <svg width="5" height="3" viewBox="0 0 5 3" aria-hidden="true"><path d="M0 3h5L2.500 0Z" fill="#777" /></svg>
          </button>
          <div className="flex h-[51px] items-center justify-center rounded-xs border border-[#b2b4b8] bg-[#f0f3f7]">
            <svg width="6" height="8" viewBox="0 0 6 8" aria-hidden="true"><path d="M0 .5h6M0 4h6M0 7.500h6" stroke="#999" /></svg>
          </div>
          <button aria-label="下へ" className="mt-auto flex h-3 items-center justify-center border border-[#b2b4b8] bg-[#eef0f3]">
            <svg width="5" height="3" viewBox="0 0 5 3" aria-hidden="true"><path d="M0 0h5L2.500 3Z" fill="#777" /></svg>
          </button>
        </div>
      </div>
      <div className="flex h-[20px] items-center justify-end gap-[4px] border-t border-[#9fa3a8] bg-[#f3f7fc] pr-[2px]">
        <button aria-label="サブツールの複製"><Ico s={16}><Page /></Ico></button>
        <button aria-label="サブツールの削除"><Ico s={16}><Trash c="#555" /></Ico></button>
      </div>
    </section>
  );
}

/* ---------- right dock ---------- */

const Flat = ({ label, children }: { label: string; children: React.ReactNode }) => (
  <button aria-label={label} className="flex w-5 shrink-0 items-center justify-center">
    <Ico s={17}>{children}</Ico>
  </button>
);
const VSep = () => <span className="mr-px ml-[3px] h-4 w-px shrink-0 bg-[#d0d2d6]" />;
const S = "#b0b3b8";

function Navigator() {
  return (
    <section className="flex h-[173px] shrink-0 flex-col pt-[5px]">
      <div className="h-[123px] shrink-0 border border-r-0 border-[#8d9096] border-b-[#b0b2b6]" />
      <div className="flex h-[26px] shrink-0 items-center overflow-hidden pl-[5px]">
        <div className="relative mr-[5px] h-3 w-[62px] shrink-0">
          <svg width="62" height="12" viewBox="0 0 62 12" aria-hidden="true" className="block">
            <path d="M.5.500h61v11H.5Z" fill="#fff" stroke="#a0a3a9" />
            <path d="M3 11.500 61.500.5v11Z" fill="#a0a3a9" />
          </svg>
          <input type="range" aria-label="拡大率" className="absolute inset-0 m-0 size-full opacity-0" />
        </div>
        <Flat label="ズームアウト">
          <circle cx="9" cy="8" r="6.500" stroke={S} strokeWidth="1.500" /><circle cx="9" cy="8" r="4" stroke={S} />
          <path d="M6.500 8h5M13 13l5 5" stroke={S} strokeWidth="2" />
        </Flat>
        <Flat label="ズームイン">
          <circle cx="9" cy="8" r="6.500" stroke={S} strokeWidth="1.500" /><circle cx="9" cy="8" r="4" stroke={S} />
          <path d="M6.500 8h5M9 5.500v5M13 13l5 5" stroke={S} strokeWidth="2" />
        </Flat>
        <Flat label="100%">
          <path d="M1 1h18v18H1Z" fill="#c3c5c9" stroke="#a0a3a9" strokeWidth="2" />
          <path d="M5 5h10v10H5Z" fill="#b4b6ba" stroke="#f3f7fc" strokeWidth="1.300" />
        </Flat>
        <VSep />
        <Flat label="フィッティング">
          <path d="M7 6h12v12H7Z" stroke={S} strokeWidth="1.300" /><path d="M1 2h12v9H1Z" fill="#f3f7fc" stroke={S} strokeWidth="1.500" />
          <path d="m9 7 8 8M9 7v4M9 7h4M17 15v-4M17 15h-4" stroke={S} strokeWidth="1.500" />
        </Flat>
        <Flat label="全体表示">
          <path d="M1 1.500h18v16H1Z" stroke={S} strokeWidth="1.500" /><path d="m5 5 10 9M5 5v4M5 5h4M15 14v-4M15 14h-4" stroke={S} strokeWidth="1.500" />
        </Flat>
      </div>
      <div className="flex h-[14px] shrink-0 items-center pl-[5px]">
        <div className="relative mr-[5px] h-3 w-[62px] shrink-0">
          <svg width="62" height="12" viewBox="0 0 62 12" aria-hidden="true" className="block">
            <path d="M.5.500h61v11H.5Z" fill="#fff" stroke="#a0a3a9" />
            <path d="M.5.500C6 2 8 11 14 11h10C30 9 34 2 40 1h8c6 1 8 8 13.500 10.500H.5Z" fill="#a0a3a9" />
          </svg>
          <input type="range" aria-label="回転" className="absolute inset-0 m-0 size-full opacity-0" />
        </div>
        <Flat label="左回転">
          <path d="M5 11C3 0 17 0 17 10c0 3-2 6-4 7" stroke={S} strokeWidth="2.500" /><path d="M0 10h9l-4 6Z" fill={S} />
        </Flat>
        <Flat label="右回転">
          <path d="M15 11C17 0 3 0 3 10c0 3 2 6 4 7" stroke={S} strokeWidth="2.500" /><path d="M11 10h9l-5 6Z" fill={S} />
        </Flat>
        <Flat label="回転をリセット"><Recycle c="#b8babe" /></Flat>
        <VSep />
        <Flat label="左右反転">
          <path d="M4 7C6-1 14 0 15 7" stroke={S} strokeWidth="2.200" /><path d="M11 6h8l-4 5Z" fill={S} />
          <path d="M10 7v12" stroke={S} strokeDasharray="2 1" /><path d="M1 9v9l6-4.500Z" stroke={S} /><path d="M19 11v8l-6-4Z" fill={S} />
        </Flat>
        <Flat label="上下反転">
          <path d="M8 3C0 3 0 15 7 16" stroke={S} strokeWidth="2.200" /><path d="m6 12 5 4-5 4Z" fill={S} />
          <path d="M7 9.500h12" stroke={S} strokeDasharray="2 1" /><path d="M9 1h10l-5 6Z" fill={S} /><path d="M11 18h8l-4-6Z" stroke={S} />
        </Flat>
      </div>
    </section>
  );
}

const DimSelect = ({ label, w }: { label: string; w: string }) => (
  <div className={cx("relative shrink-0", w)}>
    <select aria-label={label} className="block h-5 w-full appearance-none rounded-xs border border-[#b2b4b8] bg-[#f5f8fc]" />
    <svg width="9" height="5" viewBox="0 0 9 5" className="pointer-events-none absolute top-[8px] right-[3px]" aria-hidden="true">
      <path d="M0 0h9L4.500 5Z" fill="#a2a4a8" />
    </svg>
  </div>
);

function LayerPanel() {
  return (
    <section className="flex min-h-0 flex-1 flex-col border-r border-[#c4c6ca]">
      <div className="mt-1 flex items-center pl-px">
        <DimSelect label="合成モード" w="w-[85px]" />
        <input aria-label="不透明度" className="ml-[6px] h-[9px] w-[37px] border border-[#9b9fa5] bg-[#f5f8fc]" />
      </div>
      <div className="mt-px flex h-5 items-center pl-[18px]">
        <Flat label="下のレイヤーでクリッピング">
          <path d="M1 8c4-4 14-4 18 0v4c-4 5-14 5-18 0Z" fill={S} /><path d="M2 9c4 3 12 3 16 0-4-3-12-3-16 0Z" fill="#eee" /><path d="M2 6c3-5 13-5 16 0" stroke={S} strokeDasharray="2 1.500" />
        </Flat>
        <Flat label="参照レイヤー">
          <path d="M8 8h4l2 11H6ZM7 5h6v3H7ZM8 4l2-3 2 3Z" fill={S} /><path d="m5 6-5-3M5 8l-4 4M15 6l5-3M15 8l4 4" stroke="#d0d2d5" strokeWidth="1.500" />
        </Flat>
        <Flat label="レイヤーをロック">
          <path d="M5 9V5c0-5 10-5 10 0v4" stroke={S} strokeWidth="2" /><path d="M2 9h16v10H2Z" fill="#c5c7cb" stroke="#a0a3a9" /><path d="M10 12v4" stroke="#888" strokeWidth="2" />
        </Flat>
        <Flat label="透明ピクセルをロック">
          <path d="M3 6V4c0-4 6-4 6 0v2" stroke={S} strokeWidth="1.500" /><path d="M1 6h10v7H1Z" fill="#c5c7cb" stroke="#a0a3a9" />
          <path d="M11 10h5v5h-5ZM16 15h5v5h-5Z" fill="#c0c2c6" /><path d="M11 10h10v10H11Z" stroke="#d0d2d5" />
        </Flat>
        <div className="flex gap-[2px]">
          <DimSelect label="マスク" w="w-[35px]" />
          <DimSelect label="定規の表示範囲" w="w-[35px]" />
        </div>
      </div>
      <hr className="mx-[2px] mt-[2px] border-t border-[#d0d2d6]" />
      <div className="flex h-[25px] items-center pl-[11px]">
        <Flat label="新規ラスターレイヤー"><Page c={S} /></Flat>
        <Flat label="新規ベクターレイヤー"><Page c={S} /><path d="M11 12h8v7h-8Z" fill="#eee" stroke={S} /></Flat>
        <Flat label="新規レイヤーフォルダー"><path d="M0 3h6l2 2h5v11H0Z" fill="#d4d6d9" stroke={S} /><path d="M10 7h10v8l-3 4h-7Z" fill="#f3f7fc" stroke={S} /></Flat>
        <Flat label="下のレイヤーに転写"><path d="m2 5 8-3 8 3-8 4ZM2 14l8-4 8 4-8 5Z" stroke={S} strokeWidth="1.500" /><path d="M10 4v9M7 10l3 4 3-4Z" stroke={S} fill={S} strokeWidth="2" /></Flat>
        <Flat label="下のレイヤーに結合"><path d="m1 7 9-5 9 5-9 3ZM2 10v4l8 5 8-5v-4l-8 4Z" fill="#c5c7cb" stroke={S} /><path d="M10 6v8" stroke="#fff" strokeWidth="2" /></Flat>
        <Flat label="レイヤーマスクを作成"><path d="M0 4h20v12H0Z" fill="#c5c7cb" stroke={S} /><circle cx="10" cy="10" r="3.500" fill="#fff" /></Flat>
        <Flat label="マスクをレイヤーに適用"><path d="M3 2h8v5H3Z" fill={S} /><path d="m8 8 10 3-6 6Z" fill="#eee" stroke={S} /><path d="M4 5v12M1 14l3 5 3-5Z" stroke={S} strokeWidth="2" /></Flat>
        <Flat label="レイヤーを削除"><Trash c={S} /></Flat>
      </div>
      <div className="mb-[2px] flex min-h-0 flex-1 border-y border-l border-[#8d9096] border-b-[#b0b2b6]">
        <div className="w-[4px] border-r border-[#8d9096]" />
        <div className="flex-1" />
        <ScrollTrack className="mr-[2px]" />
      </div>
    </section>
  );
}

function RightDock() {
  return (
    <>
      <div className="flex w-4 shrink-0 flex-col border-r-2 border-l-2 border-r-[#c4c6ca] border-l-[#9fa1a5] bg-linear-to-r from-[#dfe0e3] to-[#f0f1f4]">
        <DockBar className="justify-end"><button aria-label="広げる"><Chevrons /></button></DockBar>
      </div>
      <aside className="flex w-[175px] shrink-0 flex-col">
        <DockBar><button aria-label="折りたたむ"><Chevrons right /></button></DockBar>
        <Header>
          <Tab
            className="w-[88px]"
            icon={
              <svg width="18" height="16" viewBox="0 0 18 16" className="mt-px shrink-0" fill="none" aria-hidden="true">
                <path d="M6.500 4.500h9.500v9H6.500Z" stroke="#777" strokeWidth="1.500" />
                <path d="M1.500 2h11v9h-11Z" stroke="#f00" strokeWidth="2" fill="#fff" />
              </svg>
            }
          >
            ナビゲーター
          </Tab>
        </Header>
        <Navigator />
        <Header>
          <Tab
            className="w-[117px]"
            icon={
              <svg width="18" height="17" viewBox="0 0 18 17" className="shrink-0" fill="none" aria-hidden="true">
                <path d="M0 13.500h17v3H0Z" fill="#111" />
                <path d="m2 9 4-1 2 2c2-5 5-8 10-9-5 3-8 7-9 11H7Z" fill="#d40000" />
              </svg>
            }
          >
            レイヤープロパティ
          </Tab>
          <IdleTab
            label="レイヤー検索"
            icon={
              <svg width="18" height="14" viewBox="0 0 18 14" fill="none" stroke="#8b8d90" aria-hidden="true">
                <path d="m1 3 6-2 5 2-6 2ZM1 7l6-2 5 2-6 2ZM1 11l6-2 5 2-6 2Z" />
                <circle cx="13" cy="9" r="4" fill="#eee" />
              </svg>
            }
          />
        </Header>
        <section className="h-[123px] shrink-0 pt-1">
          <div className="flex h-[118px] border border-b-2 border-[#8d9096] border-r-[#c4c6ca] border-b-[#b6b8bc]">
            <div className="flex-1" />
            <ScrollTrack />
          </div>
        </section>
        <Header>
          <Tab
            className="w-[69px]"
            icon={
              <svg width="18" height="16" viewBox="0 0 18 16" className="shrink-0" fill="none" stroke="#555" strokeWidth="1.200" aria-hidden="true">
                <path d="m1 4 8-2.500L17 4 9 6.500ZM1 8l8-2.500L17 8l-8 2.500ZM1 12l8-2.500 8 2.500-8 2.500Z" />
              </svg>
            }
          >
            レイヤー
          </Tab>
          <IdleTab
            label="ヒストリー"
            icon={
              <svg width="18" height="14" viewBox="0 0 18 14" aria-hidden="true">
                <path d="M9 0h9v5H9Z" fill="#777" />
                <circle cx="5" cy="10" r="4" fill="none" stroke="#555" strokeWidth="2" />
                <circle cx="12" cy="9" r="4" fill="#ddd" stroke="#555" strokeWidth="2" />
                <path d="m5 1 5 4-5 3Z" fill="#555" />
              </svg>
            }
          />
          <IdleTab
            label="オートアクション"
            icon={
              <svg width="16" height="12" viewBox="0 0 16 12" aria-hidden="true">
                <path d="m1 4 13-4v3L1 7ZM1 8h13v4H1Z" fill="#8b8d90" />
                <path d="m4 3 2 3M8 2l2 3M4 8l-2 4M8 8l-2 4" stroke="#ddd" />
              </svg>
            }
          />
        </Header>
        <LayerPanel />
        <Header>
          <Tab
            className="w-[50px]"
            icon={
              <svg width="16" height="16" viewBox="0 0 16 16" className="ml-px shrink-0" aria-hidden="true">
                <circle cx="8" cy="8" r="7.500" fill="#555" />
                <path d="M6 6.500h3.500V12M6 12h5M7.500 4H10" stroke="#fff" strokeWidth="2" fill="none" />
              </svg>
            }
          >
            情報
          </Tab>
        </Header>
        <p className="flex h-[22px] shrink-0 items-center gap-[5px] pl-px text-[11px] whitespace-nowrap text-black [font-feature-settings:'palt']">
          <span>システム:13%</span>
          <span>アプリケーション: 3%</span>
        </p>
      </aside>
    </>
  );
}

/* ---------- shell ---------- */

const menus = [
  "ファイル(F)",
  "編集(E)",
  "ページ管理(P)",
  "レイヤー(L)",
  "選択範囲(S)",
  "表示(V)",
  "フィルター(I)",
  "ウィンドウ(W)",
  "ヘルプ(H)",
];

export default function App() {
  return (
    <div className="flex h-screen flex-col overflow-hidden bg-[#f3f7fc] font-['Noto_Sans_CJK_JP',sans-serif]">
      <Defs />
      <header className="flex h-[21px] shrink-0 items-center border-b border-[#b0b0b2] bg-linear-to-b from-[#dadadb] via-[#e6e6e7] to-[#cfcfd0]">
        <div className="w-[51px]" />
        <h1 className="flex-1 pb-[5px] text-center font-['Noto_Sans',sans-serif] text-[13px] leading-4 text-[#555]">
          CLIP STUDIO PAINT EX
        </h1>
        <div className="flex w-[51px] gap-1 pb-[3px]">
          <RoundBtn s="size-[14px]" label="最小化"><path d="M1.500 7h7" /></RoundBtn>
          <RoundBtn s="size-[14px]" label="最大化"><path d="M2 2h6v6H2Z" /></RoundBtn>
          <RoundBtn s="size-[14px]" label="閉じる"><path d="m2 2 6 6M8 2 2 8" /></RoundBtn>
        </div>
      </header>
      <nav className="flex h-6 shrink-0 items-center gap-[21px] border-b border-[#b9bbbf] pb-[2px] pl-[12px]">
        {menus.map((m) => (
          <button key={m} className="text-[13px] leading-5 whitespace-nowrap text-black">
            {m}
          </button>
        ))}
      </nav>
      <div className="flex min-h-0 flex-1">
        <ToolColumn />
        <ColorColumn />
        <main className="flex min-w-0 flex-1 flex-col">
          <CommandBar />
          <div className="flex h-[21px] shrink-0 justify-end border-b border-[#9fa1a5] bg-[#e8e7ea]">
            <button aria-label="ウィンドウ一覧" className="flex w-3 items-center justify-center rounded-xs border border-[#b2b4b8] bg-[#f3f7fc]">
              <svg width="5" height="3" viewBox="0 0 5 3" aria-hidden="true"><path d="M0 0h5L2.500 3Z" fill="#a2a4a8" /></svg>
            </button>
          </div>
          <div className="relative min-h-0 flex-1">
            <SubTool />
          </div>
        </main>
        <RightDock />
      </div>
      <footer className="relative flex h-[5px] shrink-0 gap-1 border-t border-[#55505a] bg-linear-to-r from-[#e9cfe4] via-[#e9cfe4] to-[#b9a6bb]">
        <span className="w-[55px] bg-[#a797a6]" />
        <span className="w-[38px] rounded-t-sm border border-[#444] bg-[#f4eef4]" />
        <span className="w-[46px]" />
        <span className="w-[43px] rounded-t-sm border border-[#444] bg-[#fbf7fb]" />
        <span className="w-[43px] rounded-t-sm border border-[#444] bg-[#fbf7fb]" />
        <button aria-label="スタート" className="absolute -top-[5px] left-[10px] h-[10px] w-8 overflow-hidden">
          <span className="block size-8 rounded-full border border-[#2d5878] bg-[radial-gradient(circle_at_45%_45%,#d8522a_0_25%,#6d9ab8_45%,#9fc3d8)]" />
        </button>
      </footer>
    </div>
  );
}
